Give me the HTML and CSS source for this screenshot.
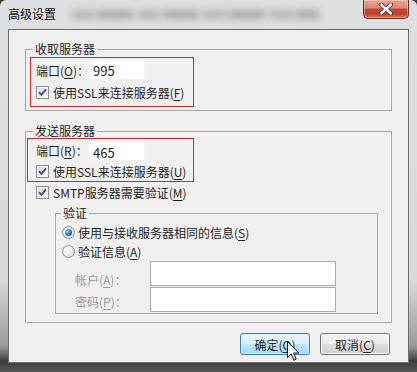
FILE: index.html
```html
<!DOCTYPE html>
<html lang="zh-CN">
<head>
    <meta charset="UTF-8"/>
    <title>高级设置</title>
    <link rel="stylesheet" href="styles.css">
</head>
<body>
<div class="window">
    <div class="titlebar">
        <span class="title">高级设置</span>
        <div class="glass-blur"></div>
        <a href="javascript:;" class="closeBtn">
            <svg width="16" height="12" viewBox="0 0 16 12">
                <path d="M3 1.5 L13 10.5 M13 1.5 L3 10.5" stroke="#5b2a24" stroke-width="4.2" stroke-linecap="round"/>
                <path d="M3 1.5 L13 10.5 M13 1.5 L3 10.5" stroke="#fff" stroke-width="2.4" stroke-linecap="round"/>
            </svg>
        </a>
    </div>

    <div class="client">
        <!-- 收取服务器 -->
        <fieldset class="group">
            <legend>收取服务器</legend>
            <div class="mark markIn">
                <div class="portRow">
                    <span class="portLabel">端口(<u>O</u>)：</span>
                    <span class="field portIn">995</span>
                </div>
                <div class="checkRow">
                    <span class="check"><svg width="13" height="13" viewBox="0 0 13 13"><path d="M3 6.2 L5.4 8.8 L10 3.4" fill="none" stroke="#3b4f82" stroke-width="1.8"/></svg></span>
                    使用SSL来连接服务器(<u>F</u>)
                </div>
            </div>
        </fieldset>

        <!-- 发送服务器 -->
        <fieldset class="group groupOut">
            <legend>发送服务器</legend>
            <div class="mark markOut">
                <div class="portRow">
                    <span class="portLabel">端口(<u>R</u>)：</span>
                    <span class="field portOut">465</span>
                </div>
                <div class="checkRow">
                    <span class="check"><svg width="13" height="13" viewBox="0 0 13 13"><path d="M3 6.2 L5.4 8.8 L10 3.4" fill="none" stroke="#3b4f82" stroke-width="1.8"/></svg></span>
                    使用SSL来连接服务器(<u>U</u>)
                </div>
            </div>
            <div class="checkRow smtpRow">
                <span class="check"><svg width="13" height="13" viewBox="0 0 13 13"><path d="M3 6.2 L5.4 8.8 L10 3.4" fill="none" stroke="#3b4f82" stroke-width="1.8"/></svg></span>
                SMTP服务器需要验证(<u>M</u>)
            </div>

            <fieldset class="group authGroup">
                <legend>验证</legend>
                <div class="radioRow firstRadio">
                    <span class="radio on"></span>
                    使用与接收服务器相同的信息(<u>S</u>)
                </div>
                <div class="radioRow">
                    <span class="radio"></span>
                    验证信息(<u>A</u>)
                </div>
                <div class="authRow">
                    <span class="authLabel acctLabel">帐户(<u>A</u>)：</span>
                    <span class="field authField"></span>
                </div>
                <div class="authRow pwdRow">
                    <span class="authLabel pwdLabel">密码(<u>P</u>)：</span>
                    <span class="field authField"></span>
                </div>
            </fieldset>
        </fieldset>

        <div class="btns">
            <a href="javascript:;" class="btn btnHover">确定(<u>O</u>)</a>
            <a href="javascript:;" class="btn">取消(<u>C</u>)</a>
        </div>
    </div>

    <!-- 鼠标指针 -->
    <svg class="cursor" width="13" height="21" viewBox="0 0 13 21">
        <path d="M0.5 0.5 L0.5 16.5 L4.2 12.9 L6.8 19.2 L9.2 18.2 L6.6 12 L11.8 12 Z" fill="#fff" stroke="#111" stroke-width="1" stroke-linejoin="round"/>
    </svg>
</div>
</body>
</html>
```

FILE: styles.css
```css
* {
    margin: 0;
    padding: 0;
    box-sizing: border-box;
}

body {
    width: 417px;
    height: 372px;
    overflow: hidden;
    font-family: "Noto Sans CJK SC", sans-serif;
    font-size: 12px;
    color: #1e1e1e;
    background: #3a3a3a;
}

u {
    text-decoration: underline;
    text-underline-offset: 2px;
}

.window {
    position: relative;
    height: 372px;
    display: flex;
    flex-direction: column;
    padding: 0 8px 9px;
    border-radius: 6px 6px 0 0;
    background: linear-gradient(#dddfe1, #d8dadc 75%, #9a9a9a 93%, #3e3e3e 97%, #555);
}

/* 标题栏 */
.titlebar {
    height: 29px;
    display: flex;
    align-items: flex-start;
}

.title {
    margin-top: 6px;
    line-height: 16px;
    font-size: 12px;
    color: #111;
}

.glass-blur {
    flex: 1;
    height: 9px;
    margin: 10px 44px 0 16px;
    background: repeating-linear-gradient(90deg, #a4a4a4 0 22px, #c8cacc 22px 26px, #939393 26px 60px, #cacccd 60px 66px);
    filter: blur(3.5px);
    opacity: .7;
}

.closeBtn {
    width: 46px;
    height: 19px;
    display: flex;
    align-items: center;
    justify-content: center;
    border: 1px solid #6b2c26;
    border-top: none;
    border-radius: 0 0 5px 5px;
    background: linear-gradient(#e9a697, #d88773 45%, #c34a37 50%, #c1402f 75%, #d77552);
    box-shadow: inset 0 0 0 1px rgba(255, 220, 200, .45);
}

/* 客户区 */
.client {
    flex: 1;
    border: 1px solid #6e6e6e;
    background: #f0f0f0;
    padding: 11px 16px 0;
}

.group {
    border: 1px solid #a7a7a7;
    padding: 0 0 3px 4px;
}

.group legend {
    margin-left: 3px;
    padding: 0 2px;
    line-height: 16px;
    color: #1e1e1e;
}

.groupOut {
    margin-top: 12px;
    padding-bottom: 8px;
}

.mark {
    border: 1px solid #d1262e;
}

.markIn {
    width: 164px;
    padding: 1px 0 4px 5px;
}

.markOut {
    width: 167px;
    margin: -1px 0 0 -3px;
    padding: 2px 0 0 8px;
}

.portRow {
    display: flex;
    align-items: flex-start;
}

.portLabel {
    width: 52px;
    flex-shrink: 0;
    white-space: nowrap;
    line-height: 24px;
}

.markOut .portLabel {
    line-height: 20px;
}

.field {
    display: block;
    background: #fff;
    border: 1px solid #f2f2f2;
    font-size: 13px;
    padding: 2px 4px 0;
    line-height: 17px;
}

.portIn {
    width: 57px;
    height: 21px;
}

.portOut {
    width: 57px;
    height: 20px;
}

.checkRow {
    display: flex;
    align-items: center;
    height: 19px;
    white-space: nowrap;
}

.markOut .checkRow {
    height: 20px;
}

.smtpRow {
    height: 20px;
    padding-left: 6px;
}

.check {
    width: 13px;
    height: 13px;
    margin-right: 4px;
    border: 1px solid #8e8f8f;
    background: linear-gradient(135deg, #dcdcdc, #f7f7f7);
    box-shadow: inset 0 0 0 1px #f4f4f4;
    position: relative;
}

.check svg {
    position: absolute;
    left: -1px;
    top: -1px;
}

/* 验证 */
.authGroup {
    margin: 3px 13px 0 25px;
    padding: 0 0 1px 6px;
}

.authGroup legend {
    margin-left: -1px;
}

.radioRow {
    display: flex;
    align-items: center;
    height: 19px;
}

.firstRadio {
    margin-top: 2px;
}

.radio {
    width: 13px;
    height: 13px;
    margin-right: 3px;
    border-radius: 50%;
    border: 1px solid #8e8f8f;
    background: radial-gradient(circle at 40% 40%, #fafafa, #d6d6d6);
    position: relative;
}

.radio.on::after {
    content: "";
    position: absolute;
    left: 2px;
    top: 2px;
    width: 7px;
    height: 7px;
    border-radius: 50%;
    background: radial-gradient(circle at 35% 35%, #8fd0f5, #1f6fb8 60%, #174f86);
}

.authRow {
    display: flex;
    align-items: flex-start;
    padding-left: 13px;
}

.pwdRow {
    margin-top: -1px;
}

.authLabel {
    width: 75px;
    color: #9a9a9a;
    line-height: 16px;
}

.acctLabel {
    padding-top: 11px;
}

.pwdLabel {
    padding-top: 7px;
}

.authField {
    width: 186px;
    height: 25px;
    border: 1px solid #ababab;
}

/* 按钮 */
.btns {
    display: flex;
    justify-content: flex-end;
    gap: 10px;
    margin: 10px 2px 0 0;
}

.btn {
    width: 70px;
    height: 22px;
    display: flex;
    align-items: center;
    justify-content: center;
    color: #1e1e1e;
    text-decoration: none;
    border: 1px solid #707070;
    border-radius: 3px;
    background: linear-gradient(#f2f2f2, #ebebeb 50%, #dddddd 50%, #cfcfcf);
    box-shadow: inset 0 0 0 1px #fbfbfb;
}

.btnHover {
    border-color: #3c7fb1;
    background: linear-gradient(#eaf6fd, #d9f0fc 50%, #bee6fd 50%, #a7d9f5);
    box-shadow: inset 0 0 0 1px #d5eefb;
}

.cursor {
    position: absolute;
    left: 287px;
    top: 341px;
}
```
